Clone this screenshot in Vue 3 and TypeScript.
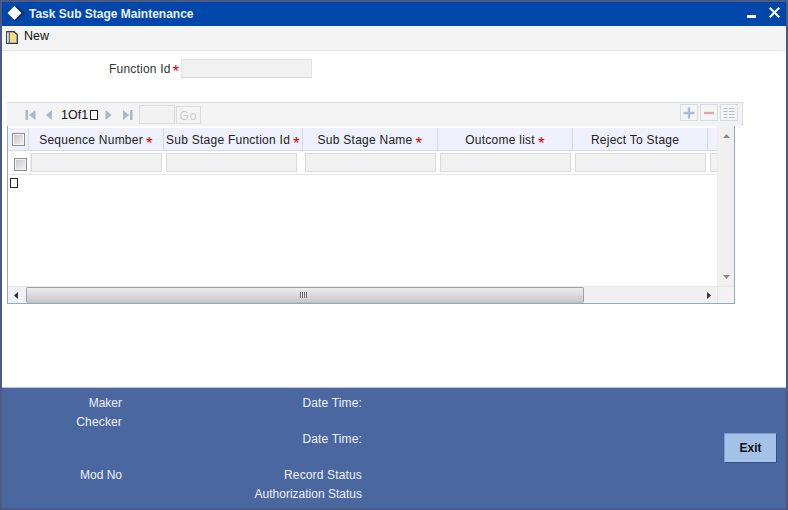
<script setup lang="ts">
interface Col { label: string; width: number; req: boolean }
const cols: Col[] = [
  { label: 'Sequence Number', width: 135, req: true },
  { label: 'Sub Stage Function Id', width: 139, req: true },
  { label: 'Sub Stage Name', width: 135, req: true },
  { label: 'Outcome list', width: 135, req: true },
  { label: 'Reject To Stage', width: 135, req: false },
]
</script>

<template>
  <div class="win">
    <header class="title">
      <svg class="logo" width="18" height="16" viewBox="0 0 18 16">
        <path d="M9 0.500 L17.500 8 L9 15.500 L7 13 L14 8 L7 3 Z" fill="#0b2a5e" />
        <path d="M7.500 1 L14.500 8 L7.500 15 L0.500 8 Z" fill="#ffffff" />
      </svg>
      <span class="title-text">Task Sub Stage Maintenance</span>
      <span class="title-btns">
        <svg class="min" width="9" height="3" viewBox="0 0 9 3"><rect width="9" height="3" fill="#fff" /></svg>
        <svg class="close" width="11" height="11" viewBox="0 0 11 11"><path d="M0.700 0.700 L10.300 10.300 M10.300 0.700 L0.700 10.300" stroke="#fff" stroke-width="2" fill="none" /></svg>
      </span>
    </header>

    <div class="toolbar">
      <svg width="12" height="13" viewBox="0 0 12 13">
        <path d="M0.700 0.700 H8 L11.300 3.500 V12.300 H0.700 Z" fill="#f6dc8a" stroke="#2f3b4a" stroke-width="1.300" />
        <path d="M0.700 0.700 H3.200 V12.300 H0.700 Z" fill="#ffffff" stroke="#2f3b4a" stroke-width="1" />
      </svg>
      <span class="new">New</span>
    </div>

    <main class="form">
      <div class="field">
        <label class="fn-label">Function Id</label>
        <span class="star">*</span>
        <span class="input fn-input"></span>
      </div>

      <section class="pager">
        <svg class="pg first" width="11" height="10" viewBox="0 0 11 10"><path d="M0.500 0 H3 V10 H0.500 Z M10.500 0 V10 L4 5 Z" /></svg>
        <svg class="pg prev" width="8" height="10" viewBox="0 0 8 10"><path d="M7 0 V10 L1 5 Z" /></svg>
        <span class="count">1Of1</span>
        <span class="tofu"></span>
        <svg class="pg next" width="7" height="10" viewBox="0 0 7 10"><path d="M0.500 0 V10 L6.500 5 Z" /></svg>
        <svg class="pg last" width="10" height="10" viewBox="0 0 10 10"><path d="M0 0 V10 L6 5 Z M7 0 H9.500 V10 H7 Z" /></svg>
        <span class="pg-input"></span>
        <span class="go">Go</span>
        <span class="pg-actions">
          <span class="act"><svg width="12" height="12" viewBox="0 0 12 12"><path d="M0.500 6 H11.500 M6 0.500 V11.500" stroke="#a9b9d8" stroke-width="2.400" /></svg></span>
          <span class="act"><svg width="12" height="12" viewBox="0 0 12 12"><path d="M1 6 H11" stroke="#e3a5a5" stroke-width="2.400" /></svg></span>
          <span class="act"><svg width="12" height="12" viewBox="0 0 12 12"><path d="M0.500 1.500 H4.500 M6 1.500 H11.500 M0.500 4.500 H4.500 M6 4.500 H11.500 M0.500 7.500 H4.500 M6 7.500 H11.500 M0.500 10.500 H4.500 M6 10.500 H11.500" stroke="#b4bccb" stroke-width="1.200" fill="none" /></svg></span>
        </span>
      </section>

      <section class="grid">
        <div class="grid-top">
          <div class="viewport">
            <div class="thead">
              <div class="sel-head"><span class="check"></span></div>
              <div v-for="c in cols" :key="c.label" class="th" :style="{ width: c.width + 'px' }">
                {{ c.label }}<span class="th-star" :class="{ off: !c.req }">*</span>
              </div>
              <div class="th filler"></div>
            </div>
            <div class="row">
              <div class="sel-cell"><span class="check"></span></div>
              <div v-for="c in cols" :key="c.label" class="td" :style="{ width: c.width + 'px' }">
                <span class="input cell-input"></span>
              </div>
              <div class="td filler"><span class="input cell-input stub"></span></div>
            </div>
            <span class="tofu row-tofu"></span>
          </div>
          <div class="vbar">
            <svg width="7" height="4" viewBox="0 0 7 4"><path d="M3.500 0 L7 4 H0 Z" fill="#8a8a8a" /></svg>
            <svg width="7" height="4" viewBox="0 0 7 4"><path d="M0 0 H7 L3.500 4 Z" fill="#8a8a8a" /></svg>
          </div>
        </div>
        <div class="hbar">
          <div class="harrow">
            <svg width="4" height="7" viewBox="0 0 4 7"><path d="M4 0 V7 L0 3.500 Z" fill="#333" /></svg>
          </div>
          <div class="thumb"><span class="grip"></span></div>
          <div class="htrack">
            <svg width="4" height="7" viewBox="0 0 4 7"><path d="M0 0 V7 L4 3.500 Z" fill="#333" /></svg>
          </div>
          <div class="corner"></div>
        </div>
      </section>
    </main>

    <footer class="foot">
      <div class="audit">
        <span class="a1">Maker</span>
        <span class="b1 wide">Date Time:</span>
        <span class="a2">Checker</span>
        <span class="b3 wide">Date Time:</span>
        <span class="a5">Mod No</span>
        <span class="b5 wide">Record Status</span>
        <span class="b6">Authorization Status</span>
      </div>
      <button class="exit" type="button">Exit</button>
    </footer>
  </div>
</template>

<style>
html, body { margin: 0; padding: 0; background: #fff; }
</style>

<style scoped>
* { box-sizing: border-box; }
.win {
  width: 788px;
  height: 510px;
  border: 2px solid #4a5a82;
  display: flex;
  flex-direction: column;
  font-family: "Liberation Sans", Arial, sans-serif;
  font-size: 12px;
  color: #222;
  overflow: hidden;
}
.title {
  height: 24px;
  flex: none;
  background: #0047ab;
  display: flex;
  align-items: center;
  padding: 0 6px 0 5px;
  color: #fff;
}
.logo { margin: -2px 4px 0 0; }
.title-text { font-weight: 700; font-size: 12px; color: #eaf1fc; }
.title-btns { margin-left: auto; align-self: stretch; display: flex; align-items: flex-start; gap: 13px; }
.min { margin-top: 13px; }
.close { margin-top: 5px; }
.toolbar {
  height: 25px;
  flex: none;
  background: #f3f3f3;
  border-bottom: 1px solid #e6e6e6;
  display: flex;
  align-items: center;
  padding: 0 0 2px 4px;
}
.new { margin: -3px 0 0 6px; font-size: 12.500px; color: #111; }
.form { flex: 1; background: #fff; min-height: 0; display: flex; flex-direction: column; padding-left: 5px; }
.field { height: 19px; margin-top: 8px; display: flex; align-items: center; }
.fn-label { margin-left: 102px; color: #333; letter-spacing: 0.200px; }
.star { color: #d00; font-size: 17px; font-weight: 400; line-height: 19px; margin: 6px 2px 0 2px; width: 6px; }
.input { display: block; background: #f1f1f1; border: 1px solid #e2e2e2; border-bottom-color: #d5d5d5; }
.fn-input { width: 131px; height: 19px; }
.pager {
  width: 736px;
  height: 24px;
  margin-top: 24px;
  background: #f3f3f3;
  border-top: 1px solid #d8dce4;
  border-right: 1px solid #d8dce4;
  display: flex;
  align-items: center;
  padding-left: 18px;
}
.pg { fill: #a9b8cf; flex: none; }
.prev { margin-left: 9px; }
.count { width: 26px; margin-left: 8px; font-size: 12.500px; color: #111; white-space: nowrap; flex: none; }
.tofu { display: block; width: 8px; height: 10px; border: 1px solid #222; background: #fff; flex: none; }
.pager .tofu { margin-left: 3px; }
.next { margin-left: 7px; }
.last { margin-left: 11px; }
.pg-input { width: 36px; height: 19px; margin-left: 6px; background: #f1f1f1; border: 1px solid #dcdcdc; flex: none; }
.go { width: 25px; height: 18px; margin-left: 1px; margin-top: 1px; border: 1px solid #dcdcdc; color: #cdcdcd; text-align: center; line-height: 19px; font-size: 12px; letter-spacing: 1px; flex: none; }
.pg-actions { margin-left: auto; display: flex; gap: 2px; margin-right: 4px; margin-top: -4px; }
.act { width: 18px; height: 17px; border: 1px solid #d5dae4; display: flex; align-items: center; justify-content: center; background: #f4f4f4; }
.grid { width: 728px; height: 178px; border: 1px solid #8fa8c4; border-top: 0; display: flex; flex-direction: column; background: #fff; }
.grid-top { flex: 1; min-height: 0; display: flex; }
.viewport { flex: 1; min-width: 0; overflow: hidden; }
.thead { display: flex; height: 23px; margin-top: 2px; background: #eef1fb; border-bottom: 1px solid #d5dae6; white-space: nowrap; }
.sel-head { width: 21px; flex: none; border-right: 1px solid #d5dae6; display: flex; align-items: center; padding-left: 4px; }
.th { flex: none; border-right: 1px solid #d5dae6; text-align: center; line-height: 24px; color: #222; letter-spacing: 0.250px; }
.th-star { color: #d80000; font-size: 17px; line-height: 1; margin-left: 3px; vertical-align: -5px; }
.th-star.off { visibility: hidden; }
.filler { flex: 1; border-right: 0; }
.row { display: flex; height: 24px; border-bottom: 1px solid #dfe5ee; white-space: nowrap; }
.sel-cell { width: 23px; flex: none; padding: 7px 0 0 6px; border-right: 1px solid #e6ebf2; margin-right: -2px; height: 23px; background: #fff; }
.td { flex: none; padding-left: 2px; padding-top: 2px; }
.cell-input { width: 131px; height: 19px; border-color: #dadada; }
.stub { width: 20px; }
.row-tofu { margin: 3px 0 0 2px; }
.check { display: block; width: 13px; height: 13px; border: 1px solid #8e8e8e; background: linear-gradient(135deg, #c4c4c4, #f4f4f4); box-shadow: inset 0 0 0 1px #f4f4f4; }
.vbar { width: 17px; flex: none; background: #f0f0f0; border-left: 1px solid #ececec; display: flex; flex-direction: column; align-items: center; justify-content: space-between; padding: 8px 0 7px; }
.hbar { height: 17px; flex: none; display: flex; background: #f0f0f0; border-top: 1px solid #e8e8e8; }
.harrow { width: 18px; flex: none; display: flex; align-items: center; justify-content: center; padding-right: 3px; background: #eef1f8; }
.thumb { width: 558px; flex: none; background: linear-gradient(#ececec, #d9d9d9 55%, #c9c9c9); border: 1px solid #a0a0a0; border-bottom-color: #bdbdbd; border-radius: 2px; display: flex; align-items: center; justify-content: center; }
.grip { display: block; width: 7px; height: 6px; background: repeating-linear-gradient(90deg, #6a6a6a 0 1px, #e4e4e4 1px 2px); margin-left: -4px; }
.htrack { flex: 1; display: flex; align-items: center; justify-content: flex-end; padding-right: 6px; }
.corner { width: 17px; flex: none; background: #f2f2f2; border-left: 1px solid #e6e6e6; }
.foot { height: 121px; flex: none; background: #4a67a0; border-top: 1px solid #b9c4d8; display: flex; }
.audit { width: 360px; flex: none; display: grid; grid-template-columns: 120px 240px; grid-template-rows: 19px 19px 16px 19px 18px 20px; padding-top: 5px; color: #eef2f8; align-items: center; justify-items: end; height: 120px; }
.wide { letter-spacing: 0.150px; }
.a1 { grid-area: 1 / 1; }
.b1 { grid-area: 1 / 2; }
.a2 { grid-area: 2 / 1; letter-spacing: 0.150px; }
.b3 { grid-area: 3 / 2; }
.a5 { grid-area: 5 / 1; }
.b5 { grid-area: 5 / 2; }
.b6 { grid-area: 6 / 2; }
.exit { width: 53px; height: 30px; margin: 45px 0 0 362px; background: #a4c2e8; border: 1px solid #7f9cc9; border-right-color: #34507f; border-bottom-color: #34507f; font-family: inherit; font-size: 12px; font-weight: 700; color: #111; padding: 0; }
</style>
